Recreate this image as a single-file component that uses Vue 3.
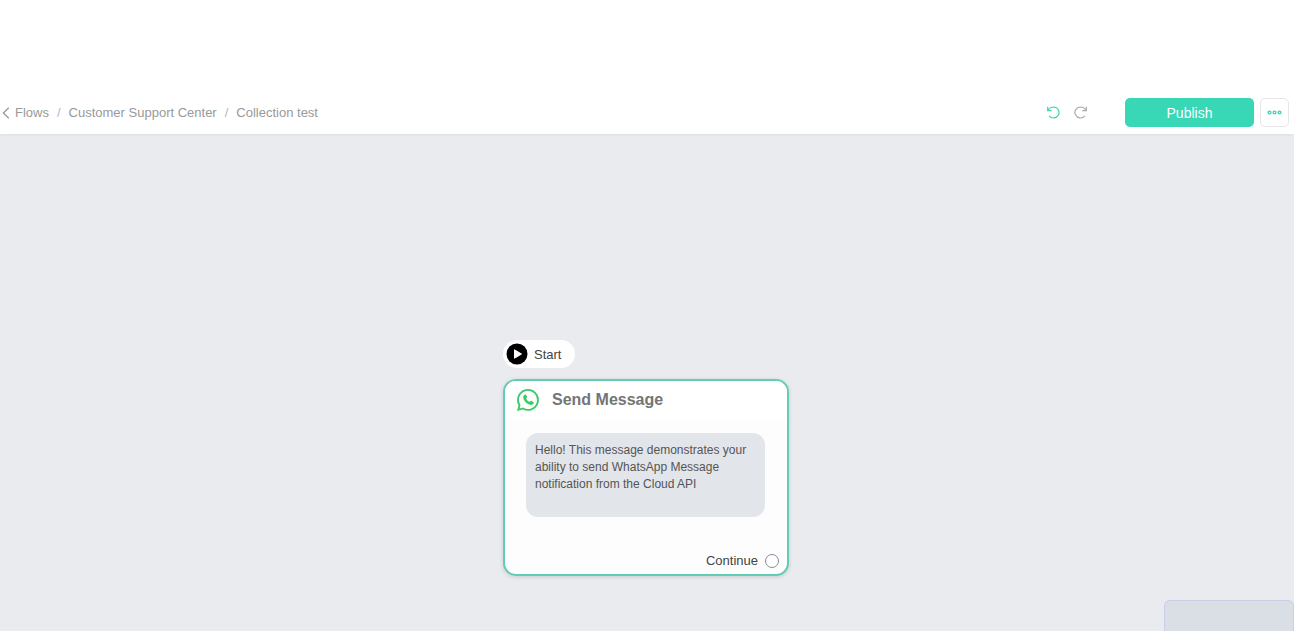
<script setup>
const crumbs = ['Customer Support Center', 'Collection test']
const message =
  'Hello! This message demonstrates your ability to send WhatsApp Message notification from the Cloud API'
</script>

<template>
  <div class="page">
    <header class="topbar">
      <nav class="crumbs" aria-label="Breadcrumb">
        <a href="#" class="back">
          <svg width="8" height="12" viewBox="0 0 8 12" fill="none" stroke="currentColor" stroke-width="1.3" aria-hidden="true">
            <path d="M6.8.8 1.4 6l5.4 5.2" />
          </svg>
          <span>Flows</span>
        </a>
        <template v-for="c in crumbs" :key="c">
          <span class="sep">/</span>
          <a href="#">{{ c }}</a>
        </template>
      </nav>
      <div class="actions">
        <button class="tool undo" type="button" aria-label="Undo">
          <svg width="13" height="13" viewBox="0 0 13 13" fill="none" stroke="currentColor" stroke-width="1.2" aria-hidden="true">
            <path d="M.7 .7v4h4M1 4.500C2.200 2 4.400 1 6.800 1a5.500 5.500 0 1 1-4.600 8.900" />
          </svg>
        </button>
        <button class="tool redo" type="button" aria-label="Redo">
          <svg width="13" height="13" viewBox="0 0 13 13" fill="none" stroke="currentColor" stroke-width="1.2" aria-hidden="true">
            <path d="M12.300 .7v4h-4M12 4.500C10.800 2 8.600 1 6.200 1a5.500 5.500 0 1 0 4.600 8.900" />
          </svg>
        </button>
        <button class="publish" type="button">Publish</button>
        <button class="more" type="button" aria-label="More options">
          <svg width="15" height="5" viewBox="0 0 15 5" fill="none" stroke="currentColor" stroke-width="1.3" aria-hidden="true">
            <circle cx="2.5" cy="2.5" r="1.4" />
            <circle cx="7.5" cy="2.5" r="1.4" />
            <circle cx="12.5" cy="2.5" r="1.4" />
          </svg>
        </button>
      </div>
    </header>

    <main class="canvas">
      <div class="flow">
        <div class="start">
          <svg width="22" height="22" viewBox="0 0 22 22" aria-hidden="true">
            <circle cx="11" cy="11" r="10.5" fill="#000" />
            <path d="M8.500 6.800v8.400l7-4.200z" fill="#fff" stroke="#fff" stroke-linejoin="round" />
          </svg>
          <span>Start</span>
        </div>
        <section class="card">
          <div class="card-head">
            <svg width="22" height="22" viewBox="0 0 16 16" fill="#3cc968" aria-hidden="true">
              <path d="M13.601 2.326A7.85 7.85 0 0 0 7.994 0C3.627 0 .068 3.558.064 7.926c0 1.399.366 2.76 1.057 3.965L0 16l4.204-1.102a7.9 7.9 0 0 0 3.79.965h.004c4.368 0 7.926-3.558 7.93-7.93A7.9 7.9 0 0 0 13.6 2.326zM7.994 14.521a6.6 6.6 0 0 1-3.356-.92l-.24-.144-2.494.654.666-2.433-.156-.251a6.56 6.56 0 0 1-1.007-3.505c0-3.626 2.957-6.584 6.591-6.584a6.56 6.56 0 0 1 4.66 1.931 6.56 6.56 0 0 1 1.928 4.66c-.004 3.639-2.961 6.592-6.592 6.592" />
              <path d="M5.600 4.100c.4-.3.900-.2 1.100.2l.6 1.300c.1.300.1.600-.1.800l-.5.700c.6 1.100 1.300 1.800 2.400 2.300l.7-.6c.2-.2.500-.3.800-.1l1.300.7c.4.200.4.600.2 1-.4.900-1.300 1.300-2.200 1.200-2.500-.4-5.100-3-5.400-5.400-.1-.800.300-1.600 1.100-2.100z" />
            </svg>
            <h2>Send Message</h2>
          </div>
          <div class="card-body">
            <p class="bubble">{{ message }}</p>
            <div class="continue">
              <span>Continue</span>
              <span class="port"></span>
            </div>
          </div>
        </section>
      </div>
      <div class="minimap"></div>
    </main>
  </div>
</template>

<style>
body {
  margin: 0;
}
</style>

<style scoped>
.page {
  display: flex;
  flex-direction: column;
  min-height: 100vh;
  background: #fff;
  color: #444;
  font-family: "Liberation Sans", Arial, sans-serif;
  font-size: 13px;
}
.topbar {
  position: relative;
  z-index: 1;
  display: flex;
  align-items: center;
  justify-content: space-between;
  padding: 98px 5px 7px 2px;
  background: #fff;
  box-shadow: 0 1px 3px rgba(0, 0, 0, 0.06);
}
.crumbs {
  display: flex;
  align-items: center;
  gap: 8px;
  color: #999;
}
.crumbs a {
  color: inherit;
  text-decoration: none;
}
.crumbs .back {
  display: flex;
  align-items: center;
  gap: 5px;
}
.sep {
  color: #b5b5bd;
}
.actions {
  display: flex;
  align-items: center;
}
button {
  padding: 0;
  border: 0;
  background: none;
  font: inherit;
  cursor: pointer;
}
.tool {
  display: flex;
  margin-right: 14px;
}
.undo {
  color: #3bd3b3;
}
.redo {
  margin-right: 38px;
  color: #aaa;
}
.publish {
  width: 129px;
  height: 29px;
  margin-right: 6px;
  border-radius: 5px;
  background: #38d7b6;
  color: #fff;
  font-size: 14px;
}
.more {
  display: flex;
  align-items: center;
  justify-content: center;
  width: 29px;
  height: 29px;
  border: 1px solid #e6e6ea;
  border-radius: 5px;
  color: #3bd3b3;
}
.canvas {
  position: relative;
  flex: 1;
  overflow: hidden;
  background: #e9ebee;
}
.flow {
  position: absolute;
  top: 206px;
  left: calc(50% - 144px);
  width: 286px;
}
.start {
  display: inline-flex;
  align-items: center;
  gap: 6px;
  box-sizing: border-box;
  height: 28px;
  padding: 0 14px 0 3px;
  border-radius: 14px;
  background: #fff;
}
.card {
  box-sizing: border-box;
  margin-top: 11px;
  border: 2px solid #60cdb4;
  border-radius: 13px;
  background: #fdfdfd;
  overflow: hidden;
  box-shadow: 0 1px 4px rgba(0, 0, 0, 0.14);
}
.card-head {
  display: flex;
  align-items: center;
  gap: 13px;
  height: 38px;
  padding-left: 12px;
  background: #fff;
}
.card-head h2 {
  margin: 0;
  color: #757575;
  font-size: 16px;
}
.card-body {
  padding: 14px 8px 6px 21px;
}
.bubble {
  box-sizing: border-box;
  min-height: 84px;
  margin: 0 14px 0 0;
  padding: 9px;
  border-radius: 12px;
  background: #e2e5ea;
  color: #555;
  font-size: 12px;
  line-height: 17px;
}
.continue {
  display: flex;
  align-items: center;
  justify-content: flex-end;
  gap: 7px;
  margin-top: 36px;
}
.port {
  box-sizing: border-box;
  width: 14px;
  height: 14px;
  border: 1px solid #7f8ba0;
  border-radius: 50%;
  background: #fff;
}
.minimap {
  position: absolute;
  right: 0;
  bottom: 0;
  box-sizing: border-box;
  width: 130px;
  height: 31px;
  border: 1px solid #c9cdea;
  border-bottom: 0;
  border-radius: 6px 6px 0 0;
  background: #dadee5;
}
</style>
